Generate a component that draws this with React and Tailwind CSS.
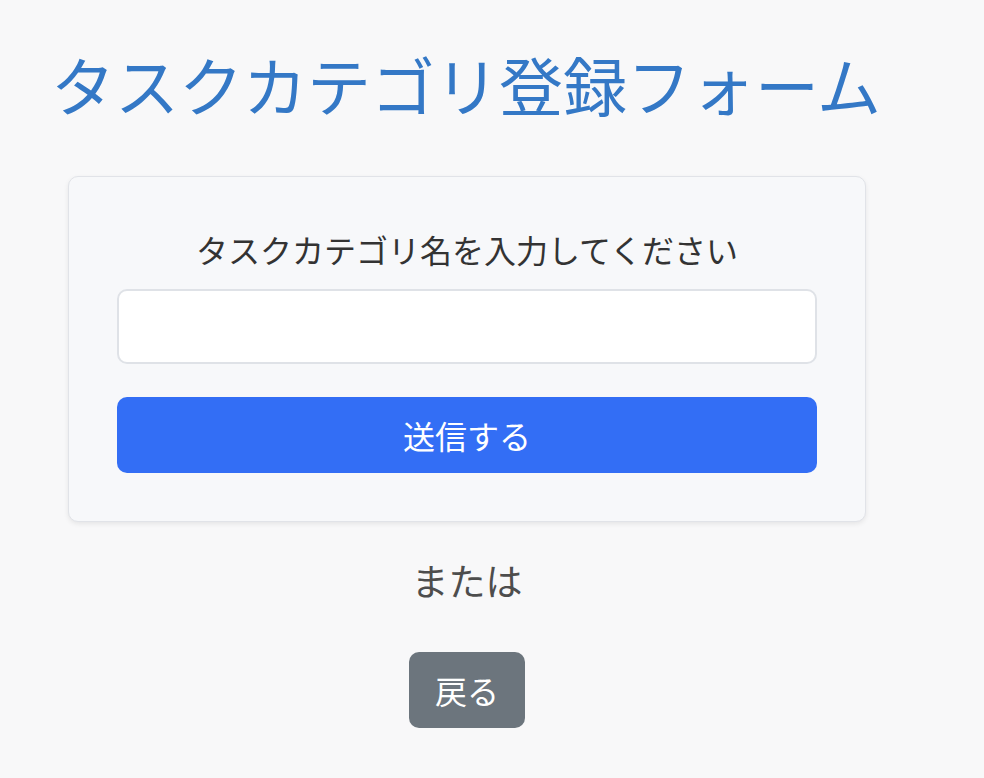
export default function App() {
  const font = { fontFamily: '"Noto Sans CJK JP", "Noto Sans", sans-serif' };
  return (
    <div className="min-h-[778px] bg-[#f8f8f9] pt-[42px]" style={font}>
      <h1 className="pl-[51px] text-[64px] leading-[1.3] font-normal text-[#3478c6]">
        タスクカテゴリ登録フォーム
      </h1>
      <div className="ml-[68px] mt-[51px] w-[798px]">
        <div className="rounded-[10px] border border-[#e1e3e8] bg-[#f7f8fa] px-[48px] py-[48px] shadow-[0_2px_5px_rgba(0,0,0,0.08)]">
          <label className="block text-center text-[32px] leading-[48px] text-[#333333]">
            タスクカテゴリ名を入力してください
          </label>
          <input
            type="text"
            className="mt-[16px] block h-[75px] w-full rounded-[10px] border-2 border-[#dfe2e7] bg-white outline-none"
          />
          <button className="mt-[33px] flex h-[76px] w-full items-center justify-center rounded-[10px] bg-[#336ef5] text-[32px] text-white">
            送信する
          </button>
        </div>
        <div className="flex flex-col items-center">
          <p className="mt-[30px] text-[37px] leading-[56px] text-[#4d4d4d]">または</p>
          <button className="mt-[44px] flex h-[76px] items-center rounded-[10px] bg-[#6c757d] px-[26px] text-[32px] text-white">
            戻る
          </button>
        </div>
      </div>
    </div>
  );
}
